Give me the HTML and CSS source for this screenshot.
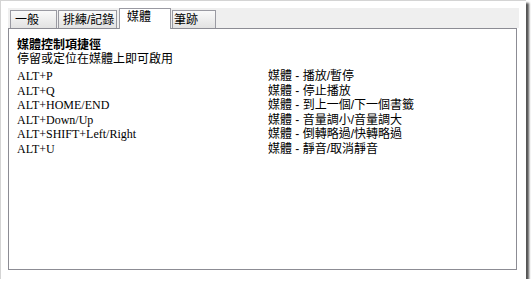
FILE: index.html
```html
<!DOCTYPE html>
<html lang="zh-TW">
  <head>
    <meta charset="UTF-8" />
    <meta name="viewport" content="width=device-width, initial-scale=1.0" />
    <title>媒體</title>
    <link rel="stylesheet" href="styles.css">
  </head>
  <body>
    <div class="frame">
      <div class="tabctl">
        <div class="tabs">
          <div class="tab tab-general">一般</div>
          <div class="tab tab-rehearse">排練/記錄</div>
          <div class="tab tab-media active">媒體</div>
          <div class="tab tab-ink">筆跡</div>
        </div>
        <div class="panel">
          <div class="title">媒體控制項捷徑</div>
          <div class="hint">停留或定位在媒體上即可啟用</div>
          <div class="keys">
            <div class="key">ALT+P</div><div class="desc">媒體 - 播放/暫停</div>
            <div class="key">ALT+Q</div><div class="desc">媒體 - 停止播放</div>
            <div class="key">ALT+HOME/END</div><div class="desc">媒體 - 到上一個/下一個書籤</div>
            <div class="key">ALT+Down/Up</div><div class="desc">媒體 - 音量調小/音量調大</div>
            <div class="key">ALT+SHIFT+Left/Right</div><div class="desc">媒體 - 倒轉略過/快轉略過</div>
            <div class="key">ALT+U</div><div class="desc">媒體 - 靜音/取消靜音</div>
          </div>
        </div>
      </div>
    </div>
  </body>
</html>
```

FILE: styles.css
```css
body {
  margin: 0;
  background-color: #fff;
  font-family: "Liberation Sans", "Noto Sans CJK TC", sans-serif;
  font-size: 12px;
  color: #000;
}
.frame {
  width: 518px;
  height: 271px;
  padding: 7px 0 0 7px;
  border-top: 1px solid #d4d4d4;
  border-left: 1px solid #d4d4d4;
  background: #fff;
  box-shadow: 3px 3px 2px #555;
}
.tabctl {
  width: 511px;
}
/* tab row */
.tabs {
  display: flex;
  align-items: flex-end;
  height: 20px;
  padding-left: 2px;
  background: #efefef;
}
.tab {
  box-sizing: border-box;
  height: 18px;
  border: 1px solid #9a9aa2;
  border-bottom: none;
  background: linear-gradient(#fafafa, #e2e2e2);
  line-height: 18px;
  white-space: nowrap;
}
.tab-general {
  width: 47px;
  padding-left: 4px;
}
.tab-rehearse {
  width: 59px;
  margin-left: 1px;
  padding-left: 4px;
}
.tab-media {
  width: 52px;
  margin-left: 2px;
  padding-left: 7px;
}
.tab-ink {
  width: 44px;
  margin-left: 1px;
  padding-left: 1px;
}
.tab.active {
  position: relative;
  z-index: 1;
  height: 21px;
  margin-bottom: -1px;
  background: #fff;
  line-height: 17px;
}
/* page body */
.panel {
  box-sizing: border-box;
  width: 509px;
  height: 242px;
  border: 1px solid #8c8c94;
  background: #fff;
  padding: 9px 0 0 8px;
}
.title {
  font-weight: bold;
  line-height: 14px;
}
.hint {
  line-height: 14px;
}
.keys {
  display: grid;
  grid-template-columns: 251px 1fr;
  margin-top: 3px;
  line-height: 14.5px;
}
.key {
  font-family: "Liberation Serif", serif;
}
```
